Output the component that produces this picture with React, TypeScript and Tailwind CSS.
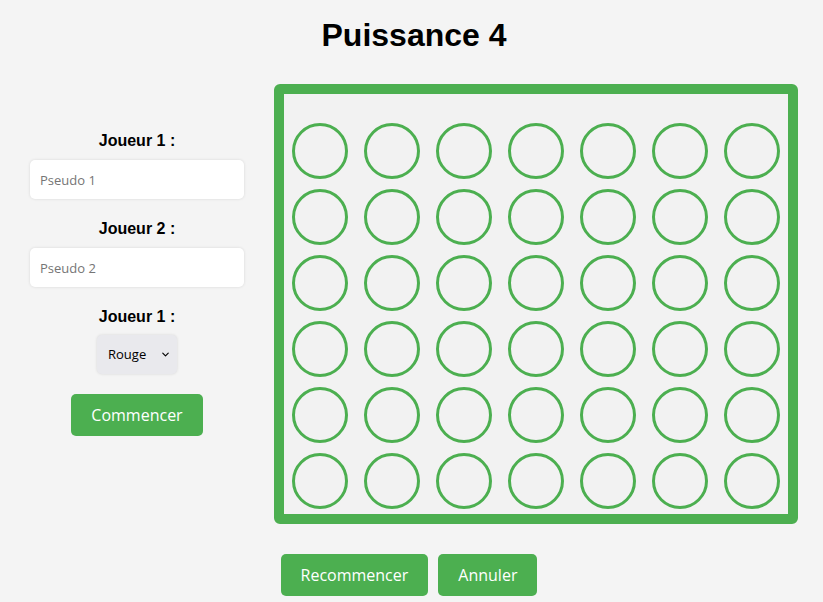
import { ChevronDown } from "lucide-react";

const cells = Array.from({ length: 42 }, (_, i) => i);

const App = () => {
  return (
    <div className="min-h-screen bg-[#f4f4f4] font-['Liberation_Sans',Arial,sans-serif] text-black">
      <h1 className="pt-[17px] pl-[5px] text-center text-[32px] leading-[36px] font-bold">
        Puissance 4
      </h1>

      <div className="mt-[31px] flex gap-[30px] pl-[30px]">
        {/* player setup */}
        <div className="w-[214px] pt-[48px] flex flex-col items-center">
          <label className="mb-[10px] text-[16px] leading-[18px] font-bold">Joueur 1 :</label>
          <input
            placeholder="Pseudo 1"
            className="mb-[21px] h-[39px] w-full rounded-[5px] bg-white px-[10px] font-['Open_Sans',sans-serif] text-[13px] text-black placeholder:text-[#757575] shadow-[0_0_3px_rgba(0,0,0,0.12)] outline-none"
          />
          <label className="mb-[10px] text-[16px] leading-[18px] font-bold">Joueur 2 :</label>
          <input
            placeholder="Pseudo 2"
            className="mb-[21px] h-[39px] w-full rounded-[5px] bg-white px-[10px] font-['Open_Sans',sans-serif] text-[13px] text-black placeholder:text-[#757575] shadow-[0_0_3px_rgba(0,0,0,0.12)] outline-none"
          />
          <label className="mb-[9px] text-[16px] leading-[18px] font-bold">Joueur 1 :</label>
          <div className="relative h-[39px] w-[80px]">
            <select className="h-full w-full appearance-none rounded-[5px] bg-[#e9e9ed] pl-[11px] font-['Open_Sans',sans-serif] text-[13px] text-black shadow-[0_0_3px_rgba(0,0,0,0.12)] outline-none">
              <option>Rouge</option>
              <option>Jaune</option>
            </select>
            <ChevronDown
              size={11}
              strokeWidth={2.5}
              className="pointer-events-none absolute right-[6px] top-[14px] text-black"
            />
          </div>
          <button className="mt-[20px] h-[42px] rounded-[5px] bg-[#4caf50] px-[20px] font-['Open_Sans',sans-serif] text-[16px] text-white">
            Commencer
          </button>
        </div>

        {/* board */}
        <div className="h-[440px] w-[524px] rounded-[6px] border-[10px] border-[#4caf50] bg-[#f2f2f2] pt-[24px]">
          <div className="grid grid-cols-[repeat(7,72px)] auto-rows-[66px]">
            {cells.map((c) => (
              <div key={c} className="flex items-center justify-center">
                <div className="h-[56px] w-[56px] rounded-full border-[3px] border-[#4caf50]" />
              </div>
            ))}
          </div>
        </div>
      </div>

      <div className="mt-[30px] flex justify-center gap-[10px] pr-[5px] font-['Open_Sans',sans-serif]">
        <button className="h-[42px] rounded-[5px] bg-[#4caf50] px-[20px] text-[16px] text-white">
          Recommencer
        </button>
        <button className="h-[42px] rounded-[5px] bg-[#4caf50] px-[20px] text-[16px] text-white">
          Annuler
        </button>
      </div>
    </div>
  );
};

export default App;
